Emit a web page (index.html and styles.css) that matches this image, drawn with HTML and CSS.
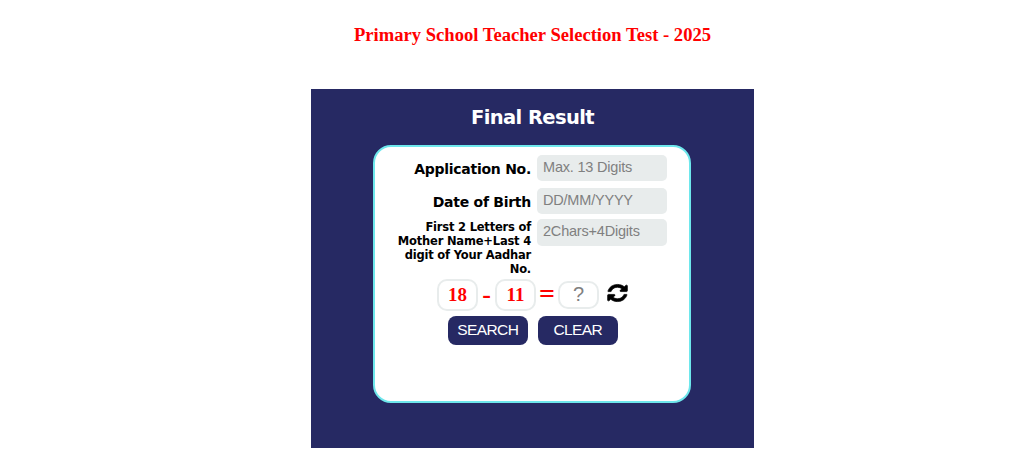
FILE: index.html
```html
<!DOCTYPE html>
<html lang="en">
<head>
<meta charset="utf-8">
<title>Final Result</title>
<link rel="stylesheet" href="styles.css">
</head>
<body>
<div class="page">
  <h1 class="title">Primary School Teacher Selection Test - 2025</h1>
  <main class="panel">
    <h2 class="panel-title">Final Result</h2>
    <form class="card">
      <div class="row">
        <label class="label">Application No.</label>
        <input class="field" type="text" placeholder="Max. 13 Digits">
      </div>
      <div class="row">
        <label class="label">Date of Birth</label>
        <input class="field" type="text" placeholder="DD/MM/YYYY">
      </div>
      <div class="row row-small">
        <label class="label label-small">First 2 Letters of Mother Name+Last 4 digit of Your Aadhar No.</label>
        <input class="field" type="text" placeholder="2Chars+4Digits">
      </div>
      <div class="captcha">
        <span class="num">18</span>
        <span class="op">-</span>
        <span class="num">11</span>
        <span class="op op-eq">=</span>
        <input class="answer" type="text" placeholder="?">
        <svg class="refresh" viewBox="0 0 1792 1792" preserveAspectRatio="none" aria-hidden="true"><path d="M1639 1056q0 5-1 7-64 268-268 434.5t-478 166.5q-146 0-282.5-55t-243.5-157l-129 129q-19 19-45 19t-45-19-19-45v-448q0-26 19-45t45-19h448q26 0 45 19t19 45-19 45l-137 137q71 66 161 102t187 36q134 0 250-65t186-179q11-17 53-117 8-23 30-23h192q13 0 22.5 9.5t9.5 22.5zm25-800v448q0 26-19 45t-45 19h-448q-26 0-45-19t-19-45 19-45l138-138q-148-137-349-137-134 0-250 65t-186 179q-11 17-53 117-8 23-30 23h-199q-13 0-22.5-9.5t-9.5-22.5v-7q65-268 270-434.5t480-166.5q146 0 284 55.5t245 156.5l130-129q19-19 45-19t45 19 19 45z"/></svg>
      </div>
      <div class="actions">
        <button class="btn" type="button">SEARCH</button>
        <button class="btn" type="button">CLEAR</button>
      </div>
    </form>
  </main>
</div>
</body>
</html>
```

FILE: styles.css
```css
* { box-sizing: border-box; }
html, body { margin: 0; background: #fff; }
.page { width: 443px; margin-left: 311px; padding-top: 24px; }
.title {
  margin: 0 0 43px;
  font: bold 18.6px/22px "Liberation Serif", serif;
  color: #f00;
  text-align: center;
  white-space: nowrap;
}
.panel {
  height: 359px;
  background: #262963;
  padding-top: 17px;
}
.panel-title {
  margin: 0 0 15px;
  font: bold 19.5px/24px "DejaVu Sans", sans-serif;
  letter-spacing: -0.6px;
  color: #fff;
  text-align: center;
}
.card {
  width: 318px;
  height: 258px;
  margin-left: 62px;
  background: #fff;
  border: 2px solid #6ee7ec;
  border-radius: 18px;
  padding-top: 8px;
}
.row {
  display: flex;
  align-items: center;
  height: 26px;
  margin-bottom: 7px;
}
.row-small { align-items: flex-start; height: 58px; margin-bottom: 2px; margin-top: -2px; }
.label {
  width: 156px;
  flex: none;
  padding-top: 2px;
  text-align: right;
  font: bold 14px/18px "DejaVu Sans", sans-serif;
  letter-spacing: -0.27px;
  color: #000;
}
.label-small { font-size: 11.5px; line-height: 14px; padding-left: 20px; padding-top: 1px; letter-spacing: -0.2px; }
.field {
  width: 130px;
  height: 26px;
  margin-left: 6px;
  padding: 0 6px 2px;
  border: 0;
  border-radius: 5px;
  background: #e8ecec;
  font: 14.5px "Liberation Sans", sans-serif;
  letter-spacing: -0.2px;
  color: #333;
}
.row-small .field { height: 27px; padding-bottom: 3px; }
.field::placeholder, .answer::placeholder { color: #808080; opacity: 1; }
.captcha {
  display: flex;
  align-items: center;
  height: 32px;
  margin-left: 62px;
}
.num {
  width: 41px;
  height: 32px;
  border: 2px solid #e8ecec;
  border-radius: 10px;
  font: bold 19px/28px "Liberation Serif", serif;
  color: #f00;
  text-align: center;
}
.op {
  width: 17px;
  font: bold 26px/28px "Liberation Serif", serif;
  color: #f00;
  text-align: center;
}
.op-eq { width: 22px; font-size: 28px; line-height: 28px; margin-top: -3px; }
.answer {
  width: 41px;
  height: 28px;
  padding: 0 0 2px;
  border: 2px solid #e8ecec;
  border-radius: 10px;
  font: 20px "Liberation Sans", sans-serif;
  text-align: center;
  outline: 0;
}
.refresh {
  width: 23px;
  height: 20px;
  margin-left: 7px;
  margin-top: -4px;
  stroke: #000;
  stroke-width: 60px;
}
.actions {
  display: flex;
  gap: 10.5px;
  margin: 5px 0 0 73px;
}
.btn {
  width: 79.5px;
  height: 29px;
  padding: 0 0 2px;
  border: 0;
  border-radius: 8px;
  background: #262963;
  color: #fff;
  font: 15.5px "Liberation Sans", sans-serif;
  letter-spacing: -0.6px;
}
```
